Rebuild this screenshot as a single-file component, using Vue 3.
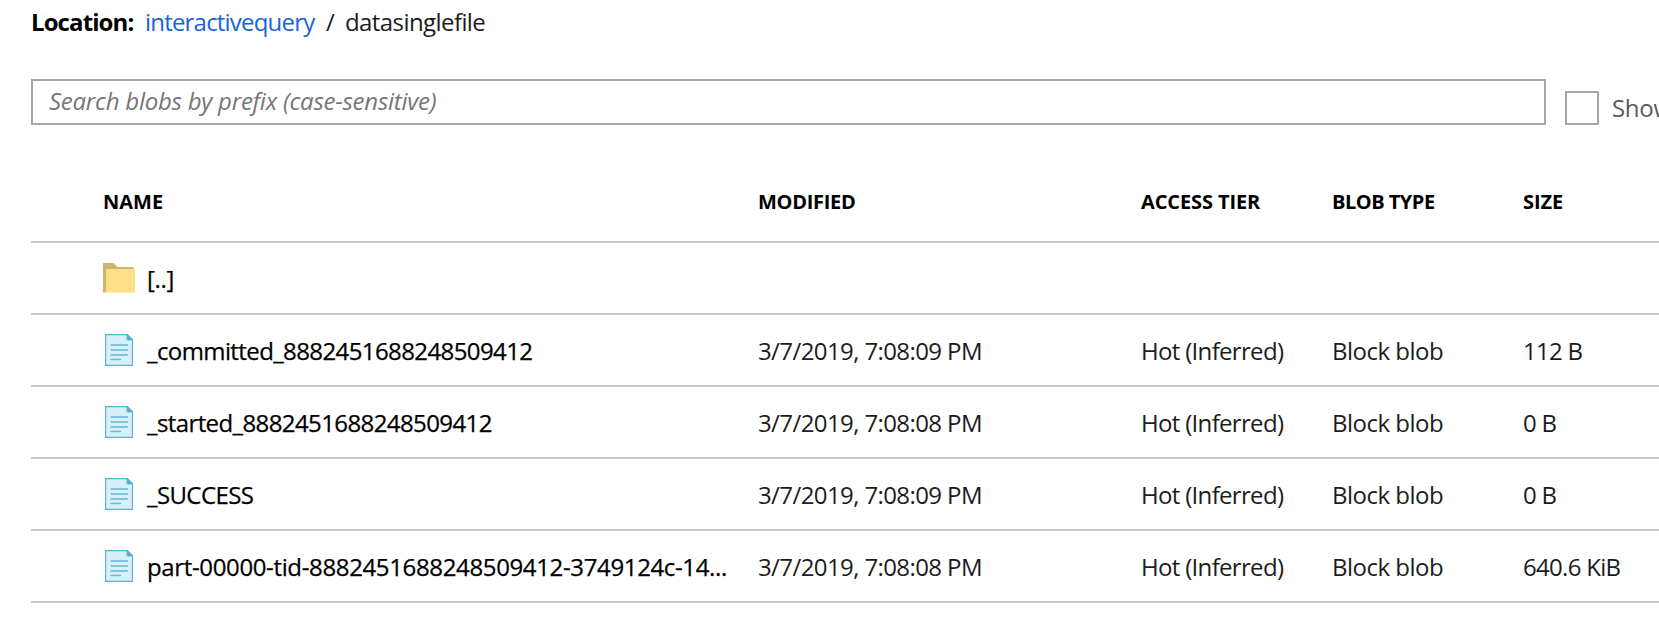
<script setup>
const columns = [
  { label: 'NAME', cls: 'h-name' },
  { label: 'MODIFIED', cls: 'h-mod' },
  { label: 'ACCESS TIER', cls: 'h-tier' },
  { label: 'BLOB TYPE', cls: 'h-type' },
  { label: 'SIZE', cls: 'h-size' },
]
const blob = (name, modified, size) => ({ name, modified, tier: 'Hot (Inferred)', type: 'Block blob', size })
const rows = [
  { name: '[..]', folder: true },
  blob('_committed_8882451688248509412', '3/7/2019, 7:08:09 PM', '112 B'),
  blob('_started_8882451688248509412', '3/7/2019, 7:08:08 PM', '0 B'),
  blob('_SUCCESS', '3/7/2019, 7:08:09 PM', '0 B'),
  blob('part-00000-tid-8882451688248509412-3749124c-14...', '3/7/2019, 7:08:08 PM', '640.6 KiB'),
]
</script>

<template>
  <main class="page">
    <nav class="location">
      <span class="loc-label">Location:</span>
      <a class="loc-link">interactivequery</a>
      <span class="loc-sep">/</span>
      <span class="loc-current">datasinglefile</span>
    </nav>
    <div class="filters">
      <div class="search"><span class="placeholder">Search blobs by prefix (case-sensitive)</span></div>
      <label class="toggle"><span class="box"></span><span class="toggle-text">Show</span></label>
    </div>
    <section class="table">
      <div class="row head">
        <span v-for="c in columns" :key="c.label" :class="c.cls">{{ c.label }}</span>
      </div>
      <div v-for="r in rows" :key="r.name" class="row item">
        <div class="name">
          <svg v-if="r.folder" class="icon" width="32" height="32" viewBox="0 0 32 32">
            <path d="M0 1h10.500l4 4H30.500v4H3v21.500H0z" fill="#cfb66c" />
            <path d="M3 7h29v22.500q0 1-1 1H3z" fill="#fddf87" />
          </svg>
          <svg v-else class="icon" width="32" height="32" viewBox="0 0 32 32">
            <path d="M2.600 .600H24.500L29.400 5.500V31.400H2.600z" fill="#daeef8" stroke="#59b4d9" stroke-width="1.200" />
            <path d="M24 .500V6h5.500z" fill="#59a9cb" stroke="#59b4d9" stroke-width=".8" />
            <path d="M8 11h16.500M8 16h16.500M8 21h16.500M8 25.500h9.500" stroke="#62b8db" stroke-width="1.300" fill="none" stroke-linecap="round" />
          </svg>
          <span class="name-text" :class="{ up: r.folder, long: r.name.length > 40 }">{{ r.name }}</span>
        </div>
        <span class="date">{{ r.modified }}</span>
        <span class="tier">{{ r.tier }}</span>
        <span class="type">{{ r.type }}</span>
        <span class="size">{{ r.size }}</span>
      </div>
    </section>
  </main>
</template>

<style>
body {
  background: #fff;
}
</style>

<style scoped>
.page {
  width: 1659px;
  height: 624px;
  box-sizing: border-box;
  padding-left: 31px;
  overflow: hidden;
  font-family: "Open Sans", "Noto Sans", sans-serif;
  font-size: 24px;
  line-height: 32px;
  color: #1c1c1c;
  white-space: nowrap;
}
.location {
  display: flex;
  height: 79px;
  padding-top: 6px;
  box-sizing: border-box;
}
.loc-label {
  width: 114px;
  font-weight: 700;
  letter-spacing: -0.9px;
  color: #000;
}
.loc-link {
  width: 181px;
  color: #1466d6;
  letter-spacing: -0.8px;
}
.loc-sep {
  width: 19px;
}
.loc-current {
  letter-spacing: -0.58px;
}
.filters {
  display: flex;
  height: 46px;
}
.search {
  flex: none;
  width: 1515px;
  box-sizing: border-box;
  border: 2px solid #a6a6a6;
  padding: 4px 16px;
}
.placeholder {
  font-style: italic;
  color: #767676;
  letter-spacing: -0.25px;
}
.toggle {
  flex: none;
  display: flex;
  padding: 12px 0 0 19px;
}
.box {
  width: 34px;
  height: 34px;
  box-sizing: border-box;
  border: 2px solid #a6a6a6;
  margin-right: 13px;
}
.toggle-text {
  padding-top: 1px;
  color: #595959;
  letter-spacing: -0.3px;
}
.row {
  display: grid;
  grid-template-columns: 655px 383px 191px 191px 136px;
  padding-left: 72px;
  box-sizing: border-box;
  border-bottom: 2px solid #cbcbcb;
}
.head {
  height: 118px;
  padding-top: 61px;
  font-size: 20px;
  font-weight: 700;
  letter-spacing: -0.5px;
  color: #000;
}
.h-name {
  letter-spacing: 0;
}
.h-mod {
  letter-spacing: -0.3px;
}
.h-tier,
.h-size {
  letter-spacing: -0.1px;
}
.item {
  height: 72px;
  padding-top: 19px;
}
.item > span {
  padding-top: 1px;
}
.name {
  display: flex;
  color: #000;
}
.icon {
  flex: none;
  margin: 0 12px 0 0;
}
.date {
  letter-spacing: -0.6px;
}
.tier {
  letter-spacing: -0.68px;
}
.type {
  letter-spacing: -0.5px;
}
.size {
  letter-spacing: -0.7px;
}
.name-text {
  padding-top: 1px;
  font-weight: 500;
  -webkit-text-stroke: 0.25px #000;
  letter-spacing: -0.6px;
}
.up {
  letter-spacing: -0.3px;
}
.long {
  letter-spacing: -0.36px;
}
</style>
